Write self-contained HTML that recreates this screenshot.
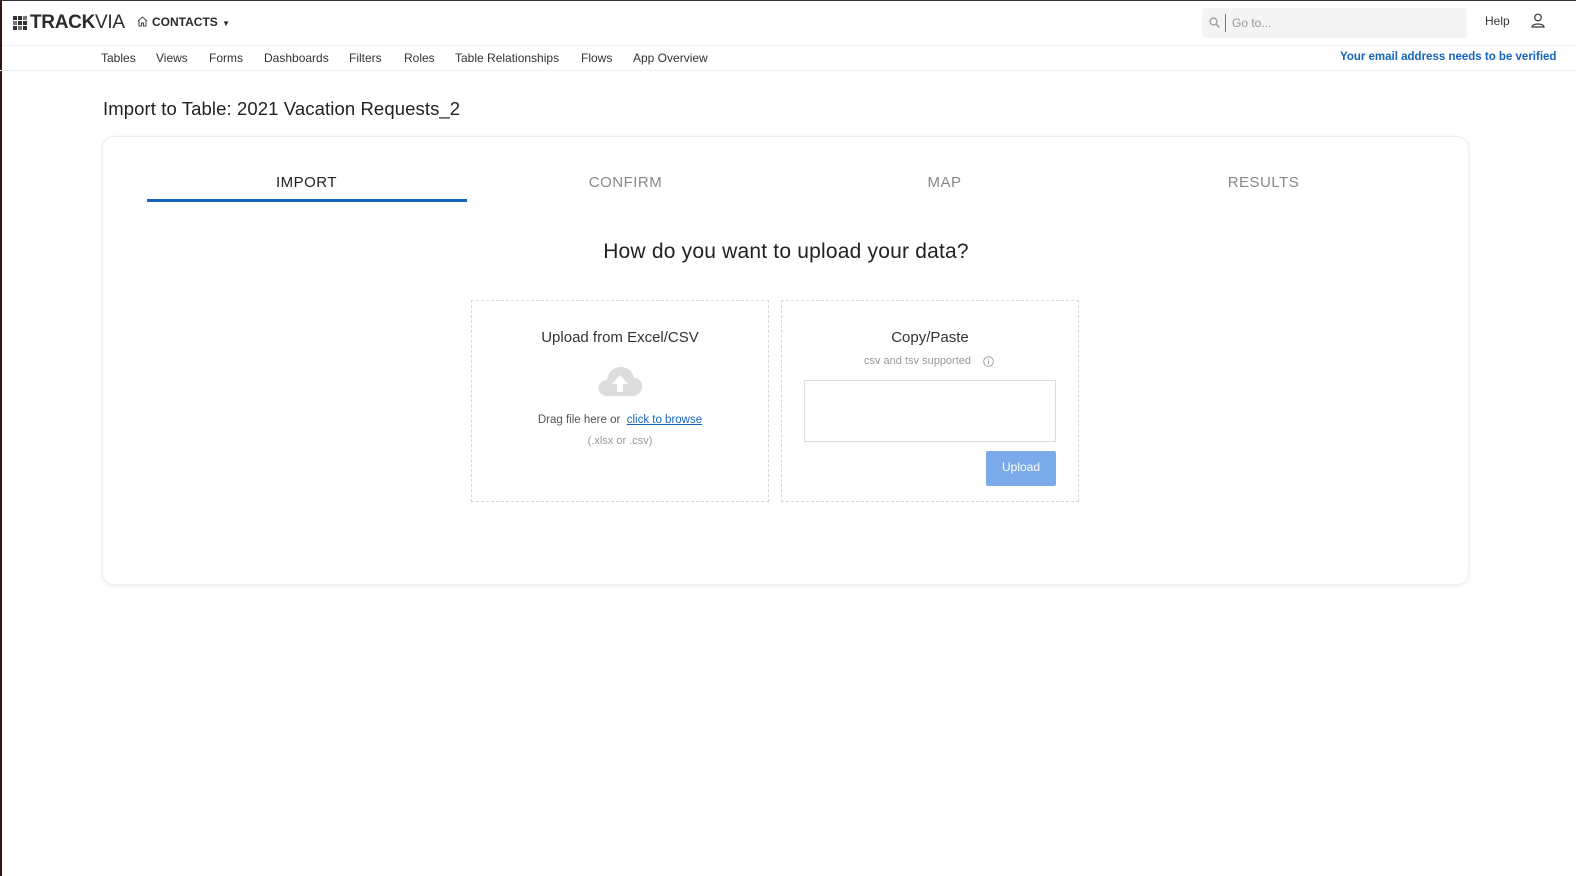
<!DOCTYPE html>
<html><head><meta charset="utf-8"><style>
*{box-sizing:border-box;margin:0;padding:0}
html,body{width:1576px;height:876px;overflow:hidden;background:#fff;font-family:"Liberation Sans",sans-serif;color:#2b2b2b}
body{position:relative}
.abs{position:absolute}
.hdr{left:0;top:0;width:1576px;height:46px;border-bottom:1px solid #eee}
.nav{left:0;top:46px;width:1576px;height:25px;border-bottom:1px solid #eee}
.nav span{position:absolute;top:5px;font-size:12px;color:#333}
.card{left:102px;top:136px;width:1367px;height:449px;border:1px solid #eee;border-radius:12px;box-shadow:0 1px 4px rgba(0,0,0,.08)}
.tab{position:absolute;top:174px;font-size:15px;color:#888;width:319px;text-align:center;letter-spacing:.5px}
.box{position:absolute;top:300px;width:298px;height:202px;border:1px dashed #d8d8d8}
</style></head><body>
<div class="abs hdr"></div>
<div class="abs" style="left:0;top:0;width:1576px;height:1px;background:#333"></div>
<div class="abs" style="left:0;top:0;width:2px;height:876px;background:#2a1a12"></div>
<svg class="abs" style="left:13px;top:16px" width="14" height="14" viewBox="0 0 14 14"><g fill="#333"><rect x="0" y="0" width="4" height="4"/><rect x="5" y="0" width="4" height="4"/><rect x="10" y="0" width="4" height="4" fill="#777"/><rect x="0" y="5" width="4" height="4" fill="#777"/><rect x="5" y="5" width="4" height="4"/><rect x="10" y="5" width="4" height="4"/><rect x="0" y="10" width="4" height="4"/><rect x="5" y="10" width="4" height="4" fill="#777"/><rect x="10" y="10" width="4" height="4"/></g></svg>
<div class="abs" style="left:30px;top:12px;font-size:19px;color:#2b2b2b;letter-spacing:-.3px"><b style="font-weight:600">TRACK</b>VIA</div>
<svg class="abs" style="left:137px;top:16px" width="11" height="11" viewBox="0 0 11 11"><path d="M1 5 L5.5 1 L10 5 M2 4.5 V10 H4.5 V7 H6.5 V10 H9 V4.5" fill="none" stroke="#444" stroke-width="1"/></svg>
<div class="abs" style="left:152px;top:15px;font-size:12px;font-weight:bold;color:#2b2b2b">CONTACTS <span style="font-size:8px;margin-left:1px">▼</span></div>
<div class="abs" style="left:1202px;top:8px;width:265px;height:30px;background:#f4f4f4;border-radius:3px"></div>
<svg class="abs" style="left:1209px;top:17px" width="11" height="11" viewBox="0 0 11 11"><circle cx="4.5" cy="4.5" r="3.5" fill="none" stroke="#999" stroke-width="1.2"/><path d="M7 7 L10.5 10.5" stroke="#999" stroke-width="1.3"/></svg>
<div class="abs" style="left:1225px;top:14px;width:1px;height:18px;background:#777"></div>
<div class="abs" style="left:1232px;top:16px;font-size:12px;color:#999">Go to...</div>
<div class="abs" style="left:1485px;top:14px;font-size:12px;color:#333">Help</div>
<svg class="abs" style="left:1531px;top:13px" width="14" height="15" viewBox="0 0 14 15"><circle cx="7" cy="4.5" r="3.3" fill="none" stroke="#333" stroke-width="1.2"/><path d="M1 14 C1 10 13 10 13 14 Z" fill="none" stroke="#333" stroke-width="1.2"/></svg>
<div class="abs nav">
<span style="left:101px">Tables</span><span style="left:156px">Views</span><span style="left:209px">Forms</span><span style="left:264px">Dashboards</span><span style="left:349px">Filters</span><span style="left:404px">Roles</span><span style="left:455px">Table Relationships</span><span style="left:581px">Flows</span><span style="left:633px">App Overview</span>
<span style="left:1340px;top:5px;color:#1565c0;font-weight:bold;font-size:11.5px">Your email address needs to be verified</span>
</div>
<div class="abs" style="left:103px;top:98px;font-size:18.5px;color:#222;letter-spacing:.1px">Import to Table: 2021 Vacation Requests_2</div>
<div class="abs card"></div>
<div class="tab" style="left:147px;color:#222">IMPORT</div>
<div class="abs" style="left:147px;top:199px;width:320px;height:3px;background:#1565c0"></div>
<div class="tab" style="left:466px">CONFIRM</div>
<div class="tab" style="left:785px">MAP</div>
<div class="tab" style="left:1104px">RESULTS</div>
<div class="abs" style="left:0;width:1572px;top:240px;text-align:center;font-size:21px;color:#222;letter-spacing:.2px">How do you want to upload your data?</div>
<div class="box" style="left:471px"></div>
<div class="box" style="left:781px"></div>
<div class="abs" style="left:471px;width:298px;top:329px;text-align:center;font-size:15px;color:#333">Upload from Excel/CSV</div>
<svg class="abs" style="left:597px;top:366px" width="46" height="32" viewBox="0 0 46 32"><path d="M11 30 C3 30 0 24 2 19 C4 15 8 14 10 14 C11 6 17 1 24 1 C31 1 36 6 37 12 C43 12 46 17 45 22 C44 27 40 30 35 30 Z" fill="#dcdcdc"/><path d="M23 9 L15 18 H20 V26 H26 V18 H31 Z" fill="#fff"/></svg>
<div class="abs" style="left:471px;width:298px;top:414px;text-align:center;font-size:11.5px;color:#555">Drag file here or &nbsp;<span style="color:#1565c0;text-decoration:underline">click to browse</span></div>
<div class="abs" style="left:471px;width:298px;top:435px;text-align:center;font-size:11px;color:#999">(.xlsx or .csv)</div>
<div class="abs" style="left:781px;width:298px;top:329px;text-align:center;font-size:15px;color:#333">Copy/Paste</div>
<div class="abs" style="left:864px;top:355px;font-size:11px;color:#999">csv and tsv supported</div>
<svg class="abs" style="left:983px;top:356px" width="11" height="11" viewBox="0 0 11 11"><circle cx="5.5" cy="5.5" r="4.8" fill="none" stroke="#999" stroke-width=".9"/><path d="M5.5 4.5 V8.3" stroke="#999"/><circle cx="5.5" cy="3" r=".6" fill="#999"/></svg>
<div class="abs" style="left:804px;top:380px;width:252px;height:62px;border:1px solid #ddd"></div>
<div class="abs" style="left:986px;top:451px;width:70px;height:35px;background:#7baaea;border-radius:2px;color:#fff;font-size:12px;text-align:center;line-height:33px">Upload</div>
</body></html>
